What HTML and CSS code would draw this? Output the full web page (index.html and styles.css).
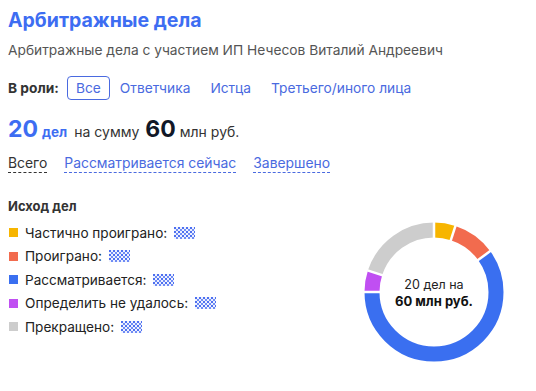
FILE: index.html
```html
<!DOCTYPE html>
<html lang="ru">
<head>
<meta charset="utf-8">
<link rel="stylesheet" href="styles.css">
</head>
<body>
<div class="page">
  <h1 class="title">Арбитражные дела</h1>
  <p class="subtitle">Арбитражные дела с участием ИП Нечесов Виталий Андреевич</p>
  <div class="roles">
    <span class="roles-label">В роли:</span>
    <span class="role active">Все</span>
    <span class="role">Ответчика</span>
    <span class="role">Истца</span>
    <span class="role">Третьего/иного лица</span>
  </div>
  <div class="summary">
    <span class="num blue">20</span><span class="unit">дел</span>
    <span class="txt">на сумму</span>
    <span class="num dark">60</span><span class="txt2">млн руб.</span>
  </div>
  <div class="tabs">
    <span class="tab current">Всего</span>
    <span class="tab">Рассматривается сейчас</span>
    <span class="tab">Завершено</span>
  </div>
  <div class="outcome">
    <div class="legend">
      <div class="legend-title">Исход дел</div>
      <div class="item"><span class="sq yellow"></span>Частично проиграно:<span class="blur"></span></div>
      <div class="item"><span class="sq orange"></span>Проиграно:<span class="blur"></span></div>
      <div class="item"><span class="sq blue-sq"></span>Рассматривается:<span class="blur"></span></div>
      <div class="item"><span class="sq purple"></span>Определить не удалось:<span class="blur"></span></div>
      <div class="item"><span class="sq gray"></span>Прекращено:<span class="blur"></span></div>
    </div>
    <div class="donut">
      <svg width="140" height="140" viewBox="0 0 140 140">
        <g transform="rotate(-90 70 70)" fill="none" stroke-width="15">
          <circle cx="70" cy="70" r="62" stroke="#f7b500" stroke-dasharray="19.47 1000" stroke-dashoffset="0"/>
          <circle cx="70" cy="70" r="62" stroke="#f26b4e" stroke-dasharray="38.95 1000" stroke-dashoffset="-19.47"/>
          <circle cx="70" cy="70" r="62" stroke="#3a6ff0" stroke-dasharray="233.7 1000" stroke-dashoffset="-58.43"/>
          <circle cx="70" cy="70" r="62" stroke="#c04ff2" stroke-dasharray="19.47 1000" stroke-dashoffset="-292.17"/>
          <circle cx="70" cy="70" r="62" stroke="#cdcdcd" stroke-dasharray="77.9 1000" stroke-dashoffset="-311.64"/>
          <g stroke="#fff" stroke-width="2.5">
            <line x1="70" y1="70" x2="140" y2="70" transform="rotate(0 70 70)"/>
            <line x1="70" y1="70" x2="140" y2="70" transform="rotate(18 70 70)"/>
            <line x1="70" y1="70" x2="140" y2="70" transform="rotate(54 70 70)"/>
            <line x1="70" y1="70" x2="140" y2="70" transform="rotate(270 70 70)"/>
            <line x1="70" y1="70" x2="140" y2="70" transform="rotate(288 70 70)"/>
          </g>
        </g>
      </svg>
      <div class="donut-text">
        <div class="d1">20 дел на</div>
        <div class="d2">60 млн руб.</div>
      </div>
    </div>
  </div>
</div>
</body>
</html>
```
FILE: styles.css
```css
html, body {
  margin: 0;
  padding: 0;
  background: #fff;
}
.page {
  font-family: Inter, "Noto Sans", sans-serif;
  color: #222;
  padding: 8px 8px 0 8px;
}
.title {
  margin: 0;
  font-size: 19.5px;
  font-weight: 700;
  color: #3d6df2;
  line-height: 24px;
}
.subtitle {
  margin: 9px 0 0 0;
  font-size: 13.75px;
  color: #555;
  line-height: 18px;
}
.roles {
  display: flex;
  align-items: center;
  margin-top: 17px;
  font-size: 13.75px;
}
.roles-label {
  font-weight: 700;
  color: #333;
  margin-right: 8px;
}
.role {
  color: #4a6ae0;
  padding: 2px 8px;
  margin-right: 2px;
  border: 1px solid transparent;
  border-radius: 4px;
  line-height: 18px;
}
.role.active {
  border-color: #4a6ae0;
  margin-right: 1px;
}
.summary {
  display: flex;
  align-items: baseline;
  margin-top: 15px;
}
.num {
  font-size: 23px;
  font-weight: 700;
}
.num.blue { color: #3d6df2; }
.num.dark { color: #111827; margin-left: 6px; }
.unit {
  font-size: 13.5px;
  font-weight: 700;
  color: #3d6df2;
  margin-left: 4px;
}
.txt {
  font-size: 14px;
  color: #333;
  margin-left: 7px;
}
.txt2 {
  font-size: 14px;
  color: #333;
  margin-left: 4px;
}
.tabs {
  display: flex;
  margin-top: 12px;
  font-size: 13.9px;
  gap: 17px;
}
.tab {
  color: #4a6ae0;
  border-bottom: 1px dashed #4a6ae0;
  line-height: 17px;
}
.tab.current {
  color: #333;
  border-bottom-color: #333;
}
.outcome {
  display: flex;
  margin-top: 25px;
}
.legend {
  width: 356px;
}
.legend-title {
  font-size: 13px;
  font-weight: 700;
  color: #333;
  line-height: 16px;
  margin-bottom: 7px;
}
.item {
  display: flex;
  align-items: center;
  font-size: 13.6px;
  color: #222;
  height: 23.5px;
}
.sq {
  width: 9px;
  height: 9px;
  margin: 0 7px 0 1px;
}
.yellow { background: #f7b500; }
.orange { background: #f26b4e; }
.blue-sq { background: #3a6ff0; }
.purple { background: #c04ff2; }
.gray { background: #cdcdcd; }
.blur {
  display: inline-block;
  width: 21px;
  height: 12px;
  margin-left: 7px;
  background-color: #eef1fe;
  background-image:
    radial-gradient(circle at 1px 1px, #4d70f0 1.1px, transparent 1.3px),
    radial-gradient(circle at 1px 1px, #6f8cf5 1.1px, transparent 1.3px);
  background-size: 4px 4px, 4px 4px;
  background-position: 0 0, 2px 2px;
}
.donut {
  position: relative;
  width: 140px;
  height: 140px;
  margin-top: 24px;
}
.donut svg {
  display: block;
}
.donut-text {
  position: absolute;
  inset: 0;
  display: flex;
  flex-direction: column;
  align-items: center;
  justify-content: center;
  text-align: center;
  padding-top: 2px;
}
.d1 {
  font-size: 12.5px;
  color: #222;
  line-height: 17px;
}
.d2 {
  font-size: 13px;
  font-weight: 700;
  color: #111;
  line-height: 17px;
}
```
